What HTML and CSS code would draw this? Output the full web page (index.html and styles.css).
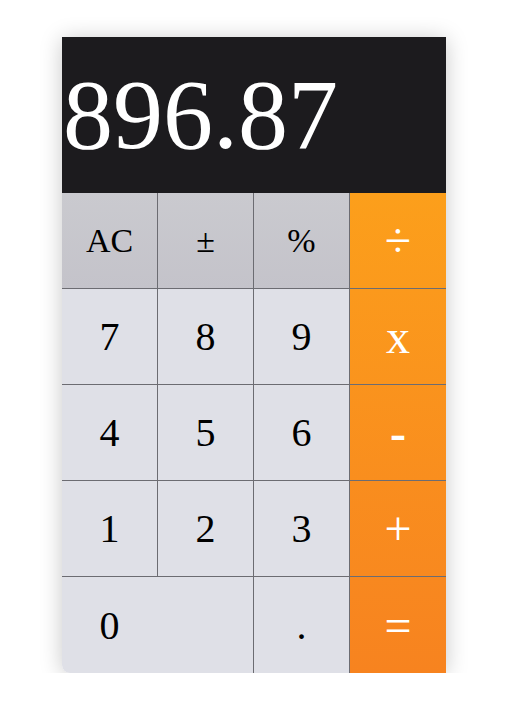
FILE: index.html
```html
<!DOCTYPE html>
<html>
<head>
<meta charset="utf-8">
<link rel="stylesheet" href="styles.css">
</head>
<body>
<div class="calc">
  <div class="display">896.87</div>
  <div class="keys">
    <div class="key fn">AC</div>
    <div class="key fn">±</div>
    <div class="key fn">%</div>
    <div class="key op op1">÷</div>
    <div class="key num">7</div>
    <div class="key num">8</div>
    <div class="key num">9</div>
    <div class="key op op2">x</div>
    <div class="key num">4</div>
    <div class="key num">5</div>
    <div class="key num">6</div>
    <div class="key op op3 heavy">-</div>
    <div class="key num">1</div>
    <div class="key num">2</div>
    <div class="key num">3</div>
    <div class="key op op4">+</div>
    <div class="key num zero last"><span class="zero-label">0</span></div>
    <div class="key num last">.</div>
    <div class="key op op5 last">=</div>
  </div>
</div>
</body>
</html>
```
FILE: styles.css
```css
html, body {
  margin: 0;
  padding: 0;
  background: #ffffff;
}
body {
  padding: 37px 0 0 62px;
}
.calc {
  width: 384px;
  box-shadow: 0 2px 22px rgba(0, 0, 0, 0.22);
  border-radius: 0 0 0 8px;
  font-family: "Liberation Serif", "Times New Roman", serif;
}
.display {
  height: 156px;
  background: #1c1b1e;
  color: #ffffff;
  font-size: 100px;
  line-height: 156px;
  padding-left: 1px;
  box-sizing: border-box;
  white-space: nowrap;
  overflow: hidden;
}
.keys {
  display: grid;
  grid-template-columns: repeat(4, 96px);
  grid-auto-rows: 96px;
}
.key {
  box-sizing: border-box;
  display: flex;
  align-items: center;
  justify-content: center;
  border-right: 1px solid #6c6c72;
  border-bottom: 1px solid #6c6c72;
  color: #000000;
  font-size: 40px;
}
.key.last {
  border-bottom: none;
}
.fn {
  background: linear-gradient(#cacacf, #c4c3ca);
  font-size: 34px;
}
.num {
  background: #dfe0e7;
}
.op {
  border-right: none;
  color: #ffffff;
  font-size: 48px;
}
.heavy {
  font-weight: bold;
}
.op1 { background: linear-gradient(#fc9f1b, #fb9a1c); }
.op2 { background: linear-gradient(#fb991c, #fa941d); }
.op3 { background: linear-gradient(#fa931d, #f98e1e); }
.op4 { background: linear-gradient(#f98d1e, #f8891f); }
.op5 { background: linear-gradient(#f8881f, #f7831f); }
.zero {
  grid-column: span 2;
  justify-content: flex-start;
  border-bottom-left-radius: 8px;
}
.zero-label {
  width: 95px;
  text-align: center;
}
```
